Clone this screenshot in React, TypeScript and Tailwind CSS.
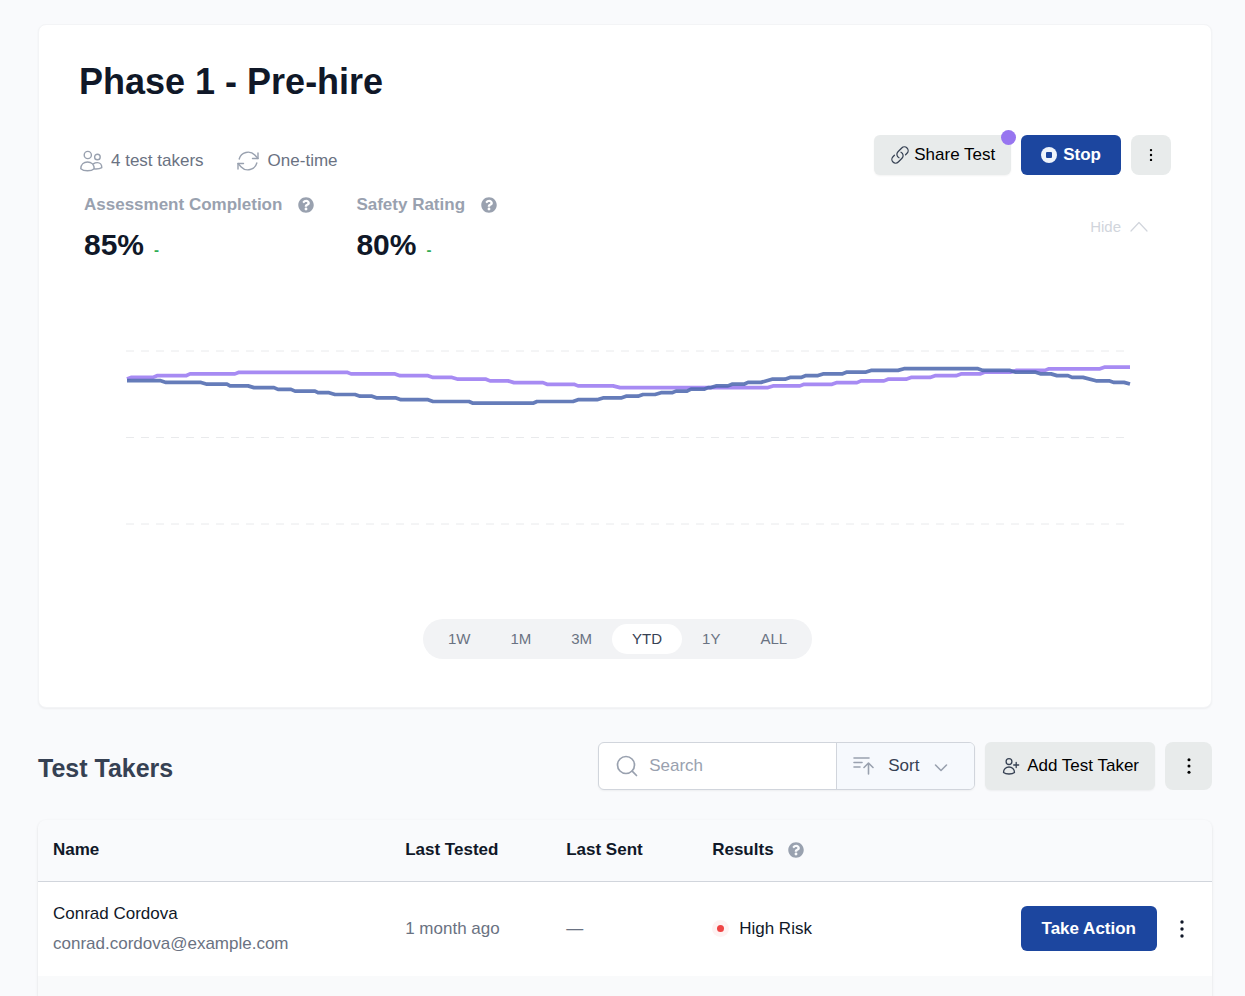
import { useState } from "react"
import { FaQuestionCircle } from "react-icons/fa"

// flat runs of each series: [from x, to x, y]
const SAFETY = [
  [127, 127, 379], [131, 153, 377.4], [157, 186, 375.7], [190, 235, 373.9], [239, 347, 372.3],
  [351, 395, 373.9], [400, 428, 375.7], [433, 452, 377.4], [458, 486, 379.2], [490, 508, 380.9],
  [514, 543, 382.6], [547, 574, 384.3], [578, 613, 385.9], [620, 768, 387.6], [773, 800, 385.9],
  [804, 832, 384.3], [837, 857, 382.6], [861, 884, 380.9], [888, 906, 379.2], [911, 930, 377.4],
  [935, 956, 375.7], [961, 980, 373.9], [985, 1011, 372.1], [1016, 1045, 370.4], [1049, 1100, 368.8],
  [1105, 1130, 367.1],
]

const COMPLETION = [
  [127, 160, 380.6], [166, 201, 382.4], [207, 227, 384.2], [230, 248, 385.9], [254, 274, 387.6],
  [278, 291, 389.4], [295, 315, 391.1], [318, 329, 392.7], [335, 355, 394.5], [360, 372, 396.2],
  [377, 396, 397.9], [401, 428, 399.7], [433, 469, 401.5], [473, 533, 403.2], [537, 573, 401.5],
  [578, 597, 399.7], [603, 621, 397.9], [626, 638, 396.2], [643, 655, 394.5], [661, 672, 392.7],
  [676, 687, 391.1], [691, 704, 389.2], [708, 711, 387.6], [716, 728, 385.9], [732, 744, 384.2],
  [748, 761, 382.4], [772, 785, 379.2], [790, 801, 377.4], [806, 818, 375.6], [823, 842, 373.9],
  [847, 866, 372.1], [871, 898, 370.4], [904, 978, 368.7], [983, 1010, 370.4], [1015, 1035, 372.1],
  [1041, 1051, 373.9], [1057, 1068, 375.6], [1072, 1083, 377.4], [1096, 1109, 380.8], [1114, 1124, 382.4],
  [1130, 1130, 384],
]

const toPoints = (runs: number[][]) =>
  runs.map(([x0, x1, y]) => `${x0},${y} ${x1},${y}`).join(" ")

const RANGES = ["1W", "1M", "3M", "YTD", "1Y", "ALL"]

const stroke = {
  fill: "none",
  stroke: "currentColor",
  strokeLinecap: "round",
  strokeLinejoin: "round",
} as const

function UsersIcon() {
  return (
    <svg className="h-6 w-6 text-gray-400" viewBox="0 0 24 24" strokeWidth="1.4" {...stroke} aria-hidden="true">
      <circle cx="8.8" cy="6" r="3.6" />
      <circle cx="18.4" cy="8" r="2.8" />
      <path d="M1.800 19.700C1.800 15.500 4.800 13 8.500 13s6.700 2.500 6.700 6.700c-1.500 1.400-4 2.100-6.700 2.100s-5.200-.7-6.700-2.100Z" />
      <path d="M14.400 14.900c1.100-.9 2.500-1.300 4-1.300 2.600 0 4.400 2.200 4.400 5-1.500 1-4.400 1.500-7.600 1.300" />
    </svg>
  )
}

function RefreshIcon() {
  return (
    <svg className="h-6 w-6 text-gray-400" viewBox="0 0 24 24" strokeWidth="1.4" {...stroke} aria-hidden="true">
      <path d="M22 4v5.500h-5.500" />
      <path d="M2 20v-5.500h5.500" />
      <path d="M3.200 10A9.200 9.200 0 0 1 18.800 6.100L22 9.500" />
      <path d="M20.800 14A9.200 9.200 0 0 1 5.200 17.900L2 14.500" />
    </svg>
  )
}

function LinkIcon() {
  return (
    <svg className="h-5 w-5 text-gray-700" viewBox="0 0 24 24" strokeWidth="1.5" {...stroke} aria-hidden="true">
      <path d="M13.190 8.688a4.500 4.500 0 0 1 1.242 7.244l-4.500 4.500a4.500 4.500 0 0 1-6.364-6.364l1.757-1.757m13.350-.622 1.757-1.757a4.500 4.500 0 0 0-6.364-6.364l-4.500 4.500a4.500 4.500 0 0 0 1.242 7.244" />
    </svg>
  )
}

function AddUserIcon() {
  return (
    <svg className="h-5 w-5 text-gray-700" viewBox="0 0 20 20" strokeWidth="1.3" {...stroke} aria-hidden="true">
      <circle cx="8" cy="5.600" r="2.900" />
      <path d="M2.500 16.500C2.500 13.300 5 11 8 11s5.500 2.300 5.500 5.500c-1.200 1-3.200 1.500-5.500 1.500s-4.300-.5-5.500-1.500Z" />
      <path d="M15.200 6.500v5M12.700 9h5" />
    </svg>
  )
}

function SortIcon() {
  return (
    <svg className="h-5 w-6 text-gray-400" viewBox="0 0 24 20" strokeWidth="1.600" {...stroke} aria-hidden="true">
      <path d="M2 2h15M2 6.500h8M2 11h6" />
      <path d="M16.500 18V7.500M12 11.500l4.500-4.500 4.500 4.500" />
    </svg>
  )
}

function DotsIcon({ className = "" }: { className?: string }) {
  return (
    <svg className={className} viewBox="0 0 20 20" fill="currentColor" aria-hidden="true">
      <circle cx="10" cy="3" r="1.700" />
      <circle cx="10" cy="10" r="1.700" />
      <circle cx="10" cy="17" r="1.700" />
    </svg>
  )
}

function Stat({ label, value }: { label: string; value: string }) {
  return (
    <div>
      <div className="flex h-5 items-center gap-4 text-[17px] font-bold text-gray-400">
        {label}
        <FaQuestionCircle className="h-4 w-4" />
      </div>
      <div className="mt-[10px] flex items-baseline gap-[10px] text-[30px] leading-10 font-bold text-gray-900">
        {value}
        <span className="text-[15px] text-[#2fac55]">-</span>
      </div>
    </div>
  )
}

function Chart() {
  return (
    <svg className="block h-auto w-full" viewBox="79 270 1092 330" fill="none" role="img" aria-label="Score history">
      {[351, 437.500, 524].map((y) => (
        <line key={y} x1="126" x2="1124" y1={y} y2={y} stroke="#e9eaec" strokeDasharray="8 7" />
      ))}
      <polyline points={toPoints(SAFETY)} stroke="#a78bf3" strokeWidth="3.700" strokeLinejoin="round" />
      <polyline points={toPoints(COMPLETION)} stroke="#4c66ae" strokeOpacity="0.860" strokeWidth="3.700" strokeLinejoin="round" />
    </svg>
  )
}

export default function App() {
  const [range, setRange] = useState("YTD")

  return (
    <main className="h-screen overflow-hidden bg-[#f9fafc] pt-6 pr-[33px] pl-[38px] font-['Liberation_Sans',Arial,sans-serif] text-[17px] leading-6 text-gray-900">
      <section className="rounded-lg border border-gray-100 bg-white px-10 pt-9 pb-12 shadow-xs">
        <h1 className="text-4xl leading-[42px] font-bold">Phase 1 - Pre-hire</h1>

        <div className="mt-8 flex items-start justify-between">
          <div className="flex items-center gap-8 pt-[14px] text-gray-500">
            <div className="flex items-center gap-2">
              <UsersIcon />
              4 test takers
            </div>
            <div className="flex items-center gap-2">
              <RefreshIcon />
              One-time
            </div>
          </div>
          <div className="flex gap-[10px]">
            <button className="relative flex h-10 items-center gap-1 rounded-md bg-[#e8ebeb] px-4 text-black shadow-xs">
              <LinkIcon />
              Share Test
              <span className="absolute -top-[5px] -right-[5px] h-[15px] w-[15px] rounded-full bg-[#9775f0]" />
            </button>
            <button className="flex h-10 items-center gap-[6px] rounded-md bg-[#1c469f] px-5 font-bold text-white">
              <span className="flex h-4 w-4 items-center justify-center rounded-full bg-[#eef3fb]">
                <span className="h-[6px] w-[6px] rounded-[1px] bg-[#1c469f]" />
              </span>
              Stop
            </button>
            <button aria-label="Test options" className="flex h-10 w-10 items-center justify-center rounded-lg bg-[#e8ebeb] text-black">
              <DotsIcon className="h-[14px] w-[14px]" />
            </button>
          </div>
        </div>

        <div className="mt-5 flex items-start justify-between pr-[22px] pl-[5px]">
          <div className="flex gap-[42px]">
            <Stat label="Assessment Completion" value="85%" />
            <Stat label="Safety Rating" value="80%" />
          </div>
          <button className="flex items-center gap-2 pt-5 text-[15px] text-gray-300">
            Hide
            <svg className="h-5 w-5" viewBox="0 0 20 20" strokeWidth="1.200" {...stroke} aria-hidden="true">
              <path d="M2 14l8-8.500 8 8.500" />
            </svg>
          </button>
        </div>

        <Chart />

        <div className="mt-[19px] mr-[15px] flex justify-center">
          <div className="flex h-10 items-center rounded-full bg-[#f2f3f5] px-[5px] text-[15px] text-gray-500">
            {RANGES.map((r) => (
              <button
                key={r}
                onClick={() => setRange(r)}
                className={r === range ? "h-[30px] rounded-full bg-white px-5 text-gray-700" : "h-[30px] px-5"}
              >
                {r}
              </button>
            ))}
          </div>
        </div>
      </section>

      <section>
        <div className="mt-[34px] flex items-center justify-between">
          <h2 className="pt-1 text-[25px] leading-8 font-bold text-gray-700">Test Takers</h2>
          <div className="flex items-center gap-[10px]">
            <div className="flex h-12 overflow-hidden rounded-md border border-gray-300 bg-white shadow-xs">
              <label className="flex w-[237px] items-center gap-[10px] pl-4">
                <svg className="h-6 w-6 shrink-0 text-gray-400" viewBox="0 0 24 24" strokeWidth="1.700" {...stroke} aria-hidden="true">
                  <circle cx="11" cy="11" r="8.500" />
                  <path d="M17.200 17.200 21.500 21.500" />
                </svg>
                <input type="search" aria-label="Search" placeholder="Search" className="w-full min-w-0 bg-transparent outline-none placeholder:text-gray-400" />
              </label>
              <button className="flex w-[138px] items-center gap-3 border-l border-gray-300 bg-[#f6f9fd] pl-[15px] text-gray-700">
                <SortIcon />
                Sort
                <svg className="h-5 w-5 text-gray-400" viewBox="0 0 20 20" strokeWidth="1.600" {...stroke} aria-hidden="true">
                  <path d="M4.500 9l5.500 5.500L15.500 9" />
                </svg>
              </button>
            </div>
            <button className="flex h-12 items-center gap-[6px] rounded-md bg-[#e8ebeb] px-4 text-black shadow-xs">
              <AddUserIcon />
              Add Test Taker
            </button>
            <button aria-label="List options" className="flex h-12 w-[47px] items-center justify-center rounded-lg bg-[#e8ebeb] text-black">
              <DotsIcon className="h-[18px] w-[18px]" />
            </button>
          </div>
        </div>

        <div className="mt-[30px] overflow-hidden rounded-lg shadow-sm">
          <table className="w-full table-fixed border-collapse text-left">
            <thead>
              <tr className="h-[61px] border-b border-gray-300">
                <th className="w-[30%] px-[15px]">Name</th>
                <th className="w-[161px] px-[15px]">Last Tested</th>
                <th className="w-[146px] px-[15px]">Last Sent</th>
                <th className="px-[15px]">
                  <span className="flex items-center gap-[14px]">
                    Results
                    <FaQuestionCircle className="h-4 w-4 text-gray-400" />
                  </span>
                </th>
                <th className="w-[230px]" aria-label="Actions" />
              </tr>
            </thead>
            <tbody>
              <tr className="h-[95px] bg-white">
                <td className="px-[15px]">
                  <div>Conrad Cordova</div>
                  <div className="mt-[6px] text-gray-500">conrad.cordova@example.com</div>
                </td>
                <td className="px-[15px] text-gray-500">1 month ago</td>
                <td className="px-[15px] text-gray-500">—</td>
                <td className="px-[15px]">
                  <div className="flex items-center gap-[10px]">
                    <span className="flex h-[17px] w-[17px] items-center justify-center rounded-full bg-red-50">
                      <span className="h-[7px] w-[7px] rounded-full bg-[#ef4444]" />
                    </span>
                    High Risk
                  </div>
                </td>
                <td className="pr-5">
                  <div className="flex items-center justify-end gap-[15px]">
                    <button className="h-[45px] rounded-md bg-[#1c469f] px-[21px] font-bold text-white">Take Action</button>
                    <button aria-label="More actions">
                      <DotsIcon className="h-5 w-5" />
                    </button>
                  </div>
                </td>
              </tr>
              <tr className="h-[95px] bg-gray-50">
                <td colSpan={5} />
              </tr>
            </tbody>
          </table>
        </div>
      </section>
    </main>
  )
}
